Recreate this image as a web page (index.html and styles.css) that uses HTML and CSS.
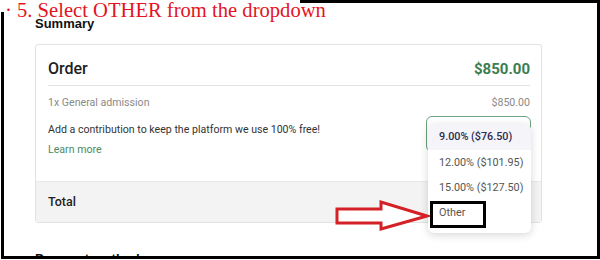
FILE: index.html
```html
<!DOCTYPE html>
<html lang="en">
<head>
    <meta charset="UTF-8">
    <title>Summary</title>
    <link rel="stylesheet" href="styles.css">
</head>
<body>
    <div class="frame">
        <h2 class="section-title">Summary</h2>
        <div class="card">
            <div class="card-head">
                <span class="head-title">Order</span>
                <span class="head-price">$850.00</span>
            </div>
            <div class="card-body">
                <div class="line">
                    <span>1x General admission</span>
                    <span>$850.00</span>
                </div>
                <div class="fee-row">
                    <div class="fee-text">
                        <p>Add a contribution to keep the platform we use 100% free!</p>
                        <a href="#" class="learn">Learn more</a>
                    </div>
                    <div class="select">
                        <ul class="menu">
                            <li class="active">9.00% ($76.50)</li>
                            <li>12.00% ($101.95)</li>
                            <li>15.00% ($127.50)</li>
                            <li>Other</li>
                        </ul>
                    </div>
                </div>
            </div>
            <div class="total-row">Total</div>
        </div>
        <h2 class="section-title next">Payment methods</h2>

        <!-- tutorial annotations -->
        <svg class="arrow" width="96" height="34" viewBox="0 0 96 34">
            <polygon points="3,10 47,10 47,3 93,17 47,30 47,24 3,24" fill="#fff" stroke="#d42027" stroke-width="3" stroke-linejoin="miter"/>
        </svg>
        <div class="mark"></div>
    </div>
    <div class="note"><span>· 5. Select OTHER from the dropdown</span></div>
</body>
</html>
```

FILE: styles.css
```css
body {
    margin: 0;
    background: #fff;
    font-family: Roboto, "Liberation Sans", sans-serif;
    width: 600px;
    height: 260px;
    position: relative;
    overflow: hidden;
}

.frame {
    position: relative;
    box-sizing: border-box;
    margin-left: 1px;
    width: 599px;
    height: 259px;
    border: 3px solid #000;
    padding: 13px 55px 0 31px;
    overflow: hidden;
}

.section-title {
    margin: 0;
    font-family: "Liberation Sans", Arial, sans-serif;
    font-size: 13px;
    line-height: 16px;
    font-weight: bold;
    color: #111;
}

.section-title.next {
    margin-top: 28px;
}

.card {
    margin-top: 12px;
    border: 1px solid #e2e2e2;
    border-radius: 3px;
}

.card-head {
    display: flex;
    justify-content: space-between;
    align-items: center;
    margin: 0 11px 0 12px;
    padding: 13px 0 5px;
    line-height: 22px;
    border-bottom: 1px solid #e3e3e3;
}

.head-title {
    font-size: 16px;
    font-weight: 500;
    color: #1e1e1e;
}

.head-price {
    font-size: 15px;
    font-weight: bold;
    color: #3b7d50;
}

.card-body {
    padding: 0 10px 23px 12px;
    font-size: 10.6px;
    line-height: 16px;
}

.line {
    display: flex;
    justify-content: space-between;
    margin: 9px 1px 0 0;
    color: #8a8a8a;
}

.fee-row {
    display: flex;
    justify-content: space-between;
    align-items: flex-start;
    margin-top: 5px;
}

.fee-text {
    padding-top: 6px;
    color: #333;
}

.fee-text p {
    margin: 0 0 4px;
}

.learn {
    color: #4b8a63;
    text-decoration: none;
}

.select {
    position: relative;
    box-sizing: border-box;
    width: 105px;
    height: 36px;
    border: 1px solid #6da27d;
    border-radius: 6px;
}

.menu {
    position: absolute;
    z-index: 2;
    left: 1px;
    top: 7px;
    width: 103px;
    margin: 0;
    padding: 0 0 8px;
    list-style: none;
    background: #fff;
    border-radius: 6px;
    box-shadow: 0 2px 8px rgba(0,0,0,0.16);
    overflow: hidden;
}

.menu li {
    height: 25px;
    line-height: 25px;
    padding-left: 11px;
    font-size: 10.8px;
    color: #555;
    white-space: nowrap;
}

.menu li.active {
    height: 26px;
    line-height: 26px;
    background: #f4f4f9;
    color: #2b2a52;
    font-weight: 500;
}

.total-row {
    height: 40px;
    line-height: 40px;
    padding-left: 12px;
    background: #f3f3f3;
    border-top: 1px solid #e8e8e8;
    font-size: 12.5px;
    font-weight: 500;
    color: #222;
}

.arrow {
    position: absolute;
    left: 330px;
    top: 196px;
    z-index: 3;
}

.mark {
    position: absolute;
    z-index: 3;
    left: 426px;
    top: 198px;
    width: 50px;
    height: 21px;
    border: 3px solid #000;
}

.note {
    position: absolute;
    left: 0;
    top: 0;
    width: 300px;
    height: 12px;
    background: #fff;
}

.note span {
    display: block;
    padding-left: 5px;
    font-family: "Liberation Serif", "Times New Roman", serif;
    font-size: 20.6px;
    line-height: 20px;
    color: #e3141e;
    white-space: nowrap;
}
```
